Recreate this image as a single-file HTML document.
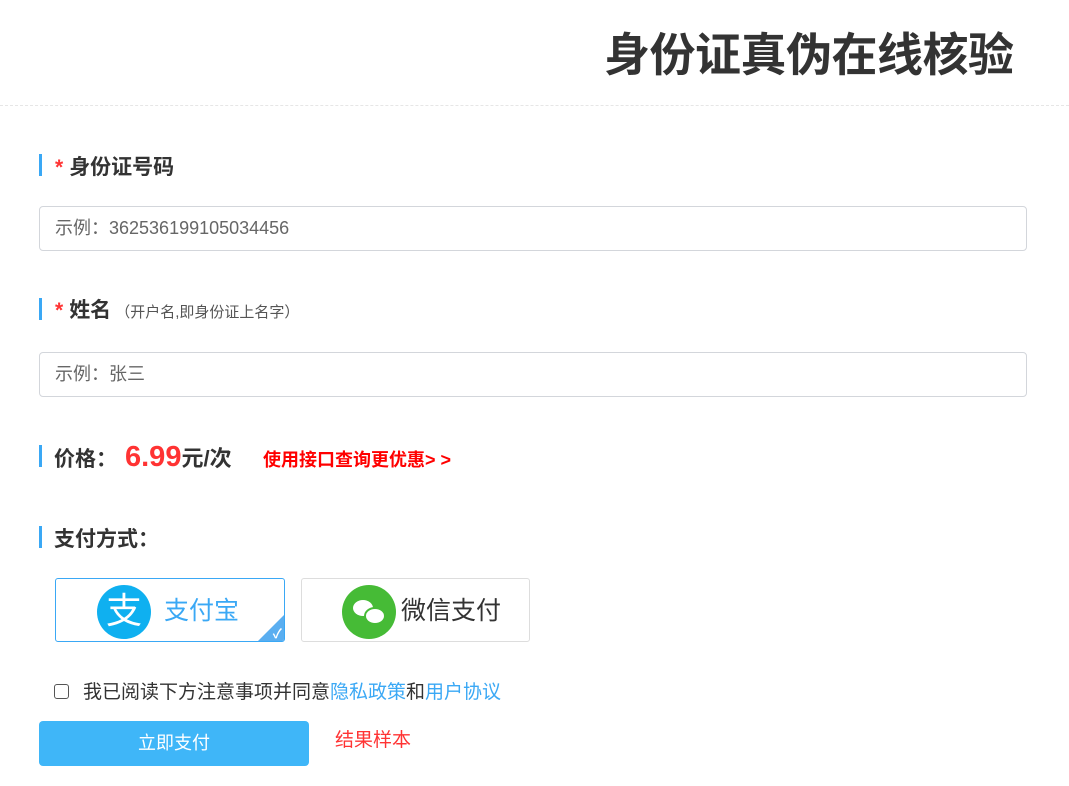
<!DOCTYPE html>
<html><head><meta charset="utf-8"><style>
*{margin:0;padding:0;box-sizing:border-box}
body{width:1069px;height:786px;background:#fff;font-family:"Liberation Sans","Noto Sans CJK SC",sans-serif;color:#333;position:relative;overflow:hidden}
.a{position:absolute;white-space:nowrap}
.bar{position:absolute;left:39px;width:3px;height:22px;background:#3aa8f5}
.inp{position:absolute;left:39px;width:988px;height:45px;border:1px solid #d3d6db;border-radius:4px;font-size:18px;color:#666;padding-left:15px;line-height:43px}
.lbl{font-size:21px;font-weight:bold;color:#333}
.req{color:#f33;margin-right:6px}
</style></head><body>
<div class="a" style="left:604px;top:26px;font-size:46px;font-weight:bold;color:#333;line-height:58px;letter-spacing:-0.5px">身份证真伪在线核验</div>
<div style="position:absolute;left:0;top:105px;width:1069px;border-top:1px dashed #e6e6e6"></div>

<div class="bar" style="top:154px"></div>
<div class="a lbl" style="left:55px;top:154px;line-height:28px"><span class="req">*</span>身份证号码</div>
<div class="inp" style="top:206px">示例：362536199105034456</div>

<div class="bar" style="top:298px"></div>
<div class="a lbl" style="left:55px;top:297px;line-height:28px"><span class="req">*</span>姓名<span style="font-size:15px;font-weight:normal;color:#555;margin-left:4px">（开户名,即身份证上名字）</span></div>
<div class="inp" style="top:352px">示例：张三</div>

<div class="bar" style="top:445px"></div>
<div class="a lbl" style="left:54px;top:445px;line-height:30px">价格：</div>
<div class="a" style="left:125px;top:438px;font-size:29px;font-weight:bold;color:#f33;line-height:38px">6.99<span style="font-size:22px;color:#333">元/次</span></div>
<div class="a" style="left:263px;top:448px;font-size:18px;font-weight:bold;color:#f00;line-height:24px">使用接口查询更优惠&gt; &gt;</div>

<div class="bar" style="top:526px"></div>
<div class="a lbl" style="left:54px;top:526px;line-height:28px">支付方式：</div>

<div style="position:absolute;left:55px;top:578px;width:230px;height:64px;border:1px solid #3aa8f5;border-radius:3px;overflow:hidden">
 <div style="position:absolute;left:41px;top:6px;width:54px;height:54px;border-radius:50%;background:#0fb0f0;color:#fff;font-size:36px;text-align:center;line-height:52px">支</div>
 <div class="a" style="left:108px;top:16px;font-size:25px;color:#3aa8f5;line-height:32px">支付宝</div>
 <div style="position:absolute;right:0;bottom:0;width:0;height:0;border-left:26px solid transparent;border-bottom:26px solid #5aaef0"></div>
 <div class="a" style="right:2px;bottom:0;color:#fff;font-size:13px;font-weight:bold;line-height:14px">✓</div>
</div>
<div style="position:absolute;left:301px;top:578px;width:229px;height:64px;border:1px solid #ddd;border-radius:3px">
 <div style="position:absolute;left:40px;top:6px;width:54px;height:54px;border-radius:50%;background:#46bb36">
  <div style="position:absolute;left:11px;top:15px;width:20px;height:16px;border-radius:50%;background:#fff"></div>
  <div style="position:absolute;left:22px;top:22px;width:22px;height:18px;border-radius:50%;background:#fff;border:2px solid #46bb36"></div>
 </div>
 <div class="a" style="left:99px;top:16px;font-size:25px;color:#333;line-height:32px">微信支付</div>
</div>

<div style="position:absolute;left:54px;top:684px;width:15px;height:15px;border:1px solid #555;border-radius:3px"></div>
<div class="a" style="left:83px;top:681px;font-size:19px;line-height:24px;color:#333">我已阅读下方注意事项并同意<span style="color:#3aa8f5">隐私政策</span>和<span style="color:#3aa8f5">用户协议</span></div>

<div style="position:absolute;left:39px;top:721px;width:270px;height:45px;background:#3fb6f8;border-radius:4px;color:#fff;font-size:18px;text-align:center;line-height:45px">立即支付</div>
<div class="a" style="left:335px;top:729px;font-size:19px;color:#f33;line-height:24px">结果样本</div>
</body></html>
